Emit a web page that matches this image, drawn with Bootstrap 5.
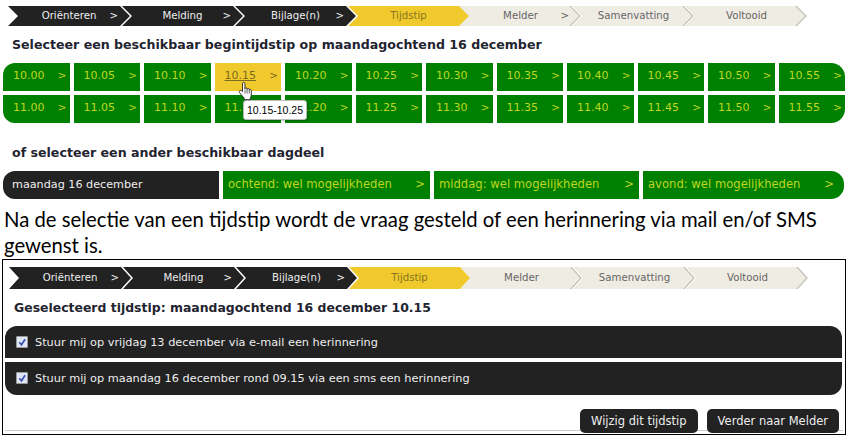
<!DOCTYPE html>
<html lang="nl">
<head>
<meta charset="utf-8">
<title>Tijdstip</title>
<link href="https://cdn.jsdelivr.net/npm/bootstrap@5.3.0/dist/css/bootstrap.min.css" rel="stylesheet">
<style>
html,body{height:438px;overflow:hidden;background:#fff}
body{font-family:"DejaVu Sans",Verdana,sans-serif;color:#222;font-size:11px}
.page{width:848px;padding:6px 2px 0 3px;position:relative}
.wiz{display:flex;margin-left:5px;height:20px;font-size:10.2px}
.wiz-tall{height:22px;margin-left:5px}
.wstep{width:121px;flex:none;margin-left:-8px;position:relative;display:grid;grid-template-columns:1fr auto 1fr;align-items:center;padding-right:12px;padding-left:12px;
 clip-path:polygon(0 0,calc(100% - 10px) 0,100% 50%,calc(100% - 10px) 100%,0 100%,10px 50%)}
.wstep:first-child{margin-left:0;width:122px}
.wstep>span{position:relative;white-space:nowrap}
.wstep>.wgt{justify-self:end}
.wdone{background:#222;color:#eee}
.wnow{background:#f0ca2c;color:#8a7420}
.wtodo{background:#c8c6bb;color:#666}
.wtodo::before{content:"";position:absolute;inset:0 2px 0 0;background:#efece3;
 clip-path:polygon(0 0,calc(100% - 10px) 0,100% 50%,calc(100% - 10px) 100%,0 100%,10px 50%)}
.wnow+.wtodo{margin-left:-9px}
.wiz-tall .wstep{transform:translateX(-1px)}
.ttl{font-weight:700;font-size:12.6px;line-height:18px;margin:10px 0 9px 9px;color:#1f2430}
.ttl2{margin-top:21px}
.slots{display:grid;grid-template-columns:repeat(12,1fr);gap:4px;padding-right:1px}
.slot{background:#008000;color:#bfd61e;height:28px;font-size:11px;display:flex;justify-content:space-between;align-items:center;padding:0 3px 2px 10px;text-decoration:none}
.slot .wgt{font-size:10.5px}
.slot-sel{background:#f0ca2c;color:#7d6a24}
.slot-sel .tm{text-decoration:underline}
.rtl{border-top-left-radius:12px}.rtr{border-top-right-radius:14px}
.rbl{border-bottom-left-radius:12px}.rbr{border-bottom-right-radius:14px}
.parts{display:grid;grid-template-columns:216px 207px 205px 201px;gap:4px;font-size:11.6px}
.part{height:28px;display:flex;align-items:center;justify-content:space-between;padding:0 5px 0 5px;background:#008000;color:#bfd61e}
.part-day{background:#222;color:#eee;padding-left:9px;border-radius:12px 0 0 12px;font-size:11.2px}
.part-end{border-radius:0 13px 13px 0;padding-right:10px}
.note{font-family:Lato,"Open Sans",sans-serif;font-size:20.3px;line-height:26px;color:#000;margin:7px 0 0 1px;white-space:nowrap}
.frame{border:1.5px solid #000;margin:1px 0 0 -1px;height:176px;padding:7px 2px 0 2px;background:#fff}
.ttl3{font-size:12.45px;margin:9px 0 8px 9px;line-height:20px}
.chk{background:#222;color:#eee;height:32px;display:flex;align-items:center;padding:2px 0 0 11px;gap:7px;font-size:11.3px;margin-right:1px}
.chk1{border-radius:12px 12px 0 0;margin-bottom:4px}
.chk2{border-radius:0 0 12px 12px;height:33px}
.chk .form-check-input{width:12px;height:12px;margin:0 0 3px;border-radius:1px;border-color:#999;background-color:#dfe6f5;
 background-size:11px;
 background-image:url("data:image/svg+xml,%3Csvg xmlns='http://www.w3.org/2000/svg' viewBox='0 0 12 12'%3E%3Cpath d='M3 6l2.2 2.6L9 3' fill='none' stroke='%233a4fb0' stroke-width='1.8'/%3E%3C/svg%3E")}
.foot{display:flex;justify-content:flex-end;gap:9px;padding-right:4px;margin-top:14px;height:22px;border-bottom:1px solid #ccc}
.wbtn{background:#222;color:#eee;font-size:11.5px;height:24px;line-height:24px;padding:0 11px;border-radius:5px;border:0;white-space:nowrap}
.wbtn:hover{background:#222;color:#eee}
.tip{position:absolute;left:243px;top:100px;width:64px;height:20px;background:#fff;border:1px solid #bbb;border-radius:3px;font:10.5px/18px "Liberation Sans",sans-serif;color:#000;text-align:center;box-shadow:1px 1px 2px rgba(0,0,0,.25)}
.hand{position:absolute;left:238px;top:81px;width:17px;height:20px}
</style>
</head>
<body>
<div class="page">
  <div class="wiz">
    <div class="wstep wdone"><i></i><span>Oriënteren</span><span class="wgt">&gt;</span></div>
    <div class="wstep wdone"><i></i><span>Melding</span><span class="wgt">&gt;</span></div>
    <div class="wstep wdone"><i></i><span>Bijlage(n)</span><span class="wgt">&gt;</span></div>
    <div class="wstep wnow"><i></i><span>Tijdstip</span><i></i></div>
    <div class="wstep wtodo"><i></i><span>Melder</span><span class="wgt">&gt;</span></div>
    <div class="wstep wtodo"><i></i><span>Samenvatting</span><i></i></div>
    <div class="wstep wtodo"><i></i><span>Voltooid</span><i></i></div>
  </div>

  <div class="ttl">Selecteer een beschikbaar begintijdstip op maandagochtend 16 december</div>

  <div class="slots">
    <a class="slot rtl"><span class="tm">10.00</span><span class="wgt">&gt;</span></a>
    <a class="slot"><span class="tm">10.05</span><span class="wgt">&gt;</span></a>
    <a class="slot"><span class="tm">10.10</span><span class="wgt">&gt;</span></a>
    <a class="slot slot-sel"><span class="tm">10.15</span><span class="wgt">&gt;</span></a>
    <a class="slot"><span class="tm">10.20</span><span class="wgt">&gt;</span></a>
    <a class="slot"><span class="tm">10.25</span><span class="wgt">&gt;</span></a>
    <a class="slot"><span class="tm">10.30</span><span class="wgt">&gt;</span></a>
    <a class="slot"><span class="tm">10.35</span><span class="wgt">&gt;</span></a>
    <a class="slot"><span class="tm">10.40</span><span class="wgt">&gt;</span></a>
    <a class="slot"><span class="tm">10.45</span><span class="wgt">&gt;</span></a>
    <a class="slot"><span class="tm">10.50</span><span class="wgt">&gt;</span></a>
    <a class="slot rtr"><span class="tm">10.55</span><span class="wgt">&gt;</span></a>
    <a class="slot rbl"><span class="tm">11.00</span><span class="wgt">&gt;</span></a>
    <a class="slot"><span class="tm">11.05</span><span class="wgt">&gt;</span></a>
    <a class="slot"><span class="tm">11.10</span><span class="wgt">&gt;</span></a>
    <a class="slot"><span class="tm">11.15</span><span class="wgt">&gt;</span></a>
    <a class="slot"><span class="tm">11.20</span><span class="wgt">&gt;</span></a>
    <a class="slot"><span class="tm">11.25</span><span class="wgt">&gt;</span></a>
    <a class="slot"><span class="tm">11.30</span><span class="wgt">&gt;</span></a>
    <a class="slot"><span class="tm">11.35</span><span class="wgt">&gt;</span></a>
    <a class="slot"><span class="tm">11.40</span><span class="wgt">&gt;</span></a>
    <a class="slot"><span class="tm">11.45</span><span class="wgt">&gt;</span></a>
    <a class="slot"><span class="tm">11.50</span><span class="wgt">&gt;</span></a>
    <a class="slot rbr"><span class="tm">11.55</span><span class="wgt">&gt;</span></a>
  </div>

  <div class="ttl ttl2">of selecteer een ander beschikbaar dagdeel</div>

  <div class="parts">
    <div class="part part-day"><span>maandag 16 december</span></div>
    <div class="part"><span>ochtend: wel mogelijkheden</span><span>&gt;</span></div>
    <div class="part"><span>middag: wel mogelijkheden</span><span>&gt;</span></div>
    <div class="part part-end"><span>avond: wel mogelijkheden</span><span>&gt;</span></div>
  </div>

  <p class="note">Na de selectie van een tijdstip wordt de vraag gesteld of een herinnering via mail en/of SMS<br>gewenst is.</p>

  <div class="frame">
    <div class="wiz wiz-tall">
      <div class="wstep wdone"><i></i><span>Oriënteren</span><span class="wgt">&gt;</span></div>
      <div class="wstep wdone"><i></i><span>Melding</span><span class="wgt">&gt;</span></div>
      <div class="wstep wdone"><i></i><span>Bijlage(n)</span><span class="wgt">&gt;</span></div>
      <div class="wstep wnow"><i></i><span>Tijdstip</span><i></i></div>
      <div class="wstep wtodo"><i></i><span>Melder</span><i></i></div>
      <div class="wstep wtodo"><i></i><span>Samenvatting</span><i></i></div>
      <div class="wstep wtodo"><i></i><span>Voltooid</span><i></i></div>
    </div>
    <div class="ttl ttl3">Geselecteerd tijdstip: maandagochtend 16 december 10.15</div>
    <label class="chk chk1"><input class="form-check-input" type="checkbox" checked> Stuur mij op vrijdag 13 december via e-mail een herinnering</label>
    <label class="chk chk2"><input class="form-check-input" type="checkbox" checked> Stuur mij op maandag 16 december rond 09.15 via een sms een herinnering</label>
    <div class="foot">
      <button class="btn wbtn" type="button">Wijzig dit tijdstip</button>
      <button class="btn wbtn" type="button">Verder naar Melder</button>
    </div>
  </div>

  <div class="tip">10.15-10.25</div>
  <svg class="hand" viewBox="0 0 17 20" aria-hidden="true"><path d="M4.5 10.5V2.6c0-1.6 2.4-1.6 2.4 0v5.2c0-1.3 2.2-1.3 2.2 0v.6c0-1.2 2.2-1.2 2.2.1v.6c0-1.1 2-1 2 .3v4.6c0 1.4-.6 2.2-1 3.2v1.5H6.2v-1.5C5 15.6 3 13.8 1.6 11.6.6 10 2.5 8.6 3.7 9.8z" fill="#fff" stroke="#222" stroke-width=".9" stroke-linejoin="round"/><path d="M7 8.5v4M9.1 8.5v4M11.3 9v3.5" stroke="#222" stroke-width=".7" fill="none"/></svg>
</div>
<script src="https://cdn.jsdelivr.net/npm/bootstrap@5.3.0/dist/js/bootstrap.bundle.min.js"></script>
</body>
</html>
